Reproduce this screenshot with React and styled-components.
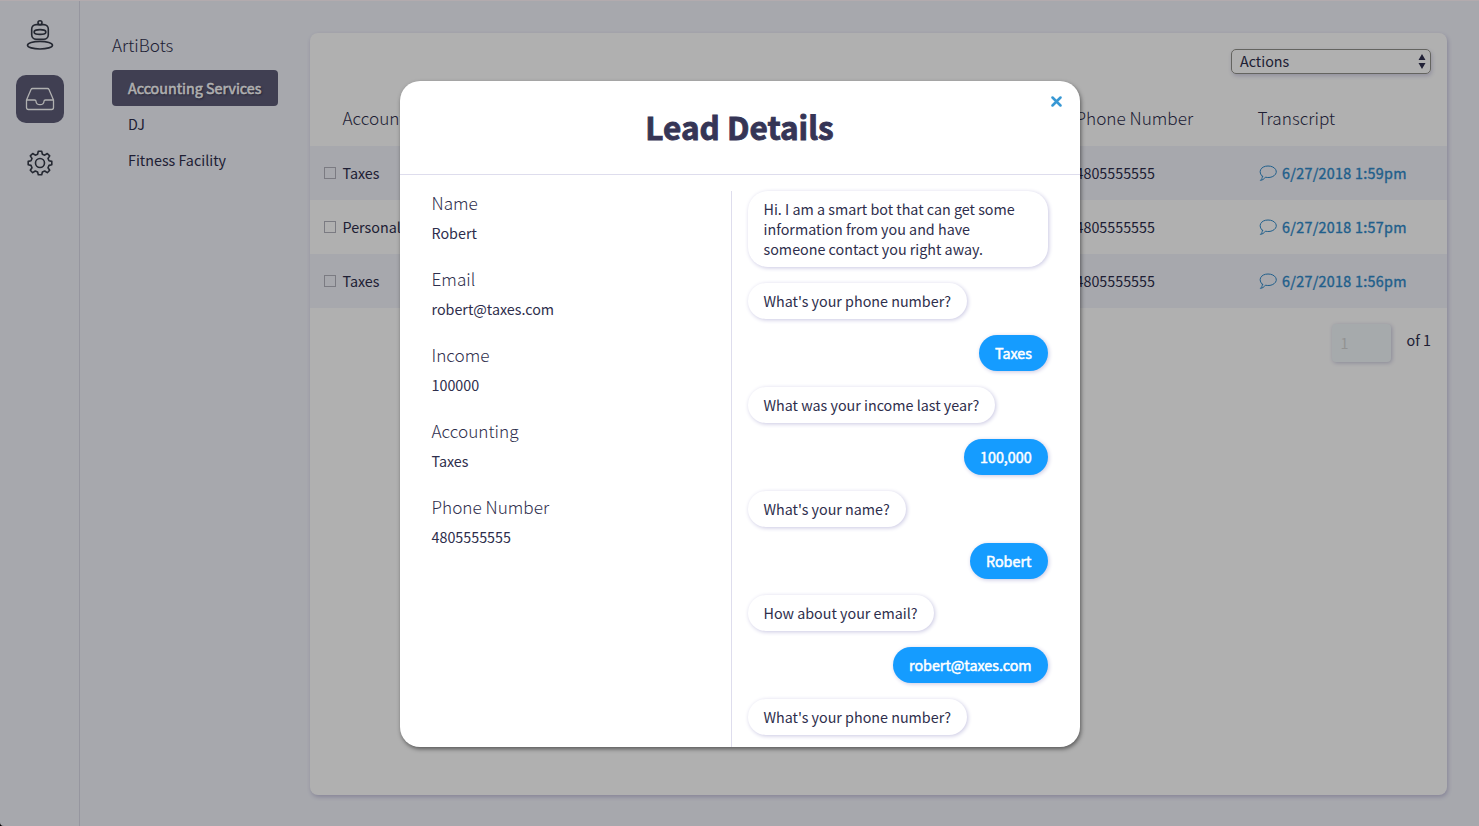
import React from "react";
import styled, { createGlobalStyle, css } from "styled-components";

const Global = createGlobalStyle`
  * { box-sizing: border-box; }
  html { background: #000; }
  body { margin: 0; overflow: hidden; color: #2e2e4c; font-family: "Noto Sans CJK SC", "Noto Sans", sans-serif; font-size: 14.32px; line-height: 20px; }
  h1, h2, h3, p, ul, dl, dt, dd { margin: 0; padding: 0; }
`;

const Page = styled.div`
  position: relative;
  display: flex;
  width: 1479px;
  height: 826px;
  overflow: hidden;
  background: #f2f3fb;
  border-top: 1px solid #b3abae;
  border-bottom-left-radius: 4px;
`;

const Rail = styled.nav`
  width: 80px;
  display: flex;
  flex-direction: column;
  align-items: center;
  gap: 16px;
  padding-top: 10px;
  border-right: 1px solid #d9dae6;
`;

const RailButton = styled.div`
  width: 48px;
  height: 48px;
  display: grid;
  place-items: center;
  border-radius: 10px;
  color: ${(p) => (p.$active ? "#ffffff" : "#353a48")};
  background: ${(p) => (p.$active ? "#5d5c78" : "transparent")};
`;

const Icon = styled.svg`
  display: block;
  fill: none;
  stroke: currentColor;
  stroke-width: ${(p) => p.$weight || 1.4};
  stroke-linejoin: round;
  stroke-linecap: round;
`;

const Sidebar = styled.aside`
  width: 230px;
  padding: 32px 32px 0;
`;

const lightLabel = css`
  font-size: 17.2px;
  font-weight: 300;
  line-height: 24px;
`;

const strong = css`
  -webkit-text-stroke: 0.5px currentColor;
`;

const SidebarTitle = styled.h2`
  ${lightLabel}
  margin-bottom: 13px;
`;

const BotItem = styled.div`
  height: 36px;
  padding: 8px 16px;
  border-radius: 4px;
  white-space: nowrap;
  ${(p) =>
    p.$active &&
    css`
      ${strong}
      background: #5d5c78;
      color: #fff;
      text-shadow: 1px 1px 2px #23233d;
    `}
`;

const Card = styled.main`
  width: 1137px;
  height: 762px;
  margin-top: 32px;
  background: #fff;
  border-radius: 8px;
  box-shadow: 1px 2px 4px #c3c1dc;
`;

const Toolbar = styled.div`
  display: flex;
  justify-content: flex-end;
  padding: 16px 16px 0;
  height: 57px;
`;

const Select = styled.div`
  width: 200px;
  height: 25px;
  display: flex;
  align-items: flex-start;
  justify-content: space-between;
  padding: 1px 4px 0 8px;
  border: 1px solid #92918c;
  border-radius: 5px;
  box-shadow: 1px 2px 4px #d3d1e5;
`;

const SelectArrows = styled.svg`
  margin-top: 3px;
  fill: #303050;
`;

const TableRow = styled.div`
  display: grid;
  grid-template-columns: 32.5px 733px 182px 1fr;
  align-items: center;
  height: ${(p) => (p.$head ? 56 : 54)}px;
  background: ${(p) => (p.$striped ? "#f2f3fb" : "transparent")};
  ${(p) => p.$head && lightLabel}
`;

const Check = styled.span`
  width: 12px;
  height: 12px;
  margin-left: 14px;
  border: 1px solid #b3b2bd;
`;

const Transcript = styled.a`
  display: flex;
  align-items: center;
  gap: 5px;
  padding-left: 1.5px;
  color: #2f8aca;
  letter-spacing: 0.3px;
  -webkit-text-stroke: 0.35px currentColor;
`;

const Pager = styled.div`
  display: flex;
  justify-content: flex-end;
  gap: 15px;
  padding: 16px 16px 0;
`;

const PageBox = styled.div`
  width: 59px;
  height: 38px;
  margin-right: 1px;
  padding: 9px 9px;
  color: #d4d4d4;
  background: #f1f6f9;
  border-radius: 4px;
  box-shadow: 1px 1px 4px #c8c7dc;
`;

const PageTotal = styled.span`
  padding-top: 6px;
`;

const Overlay = styled.div`
  position: absolute;
  inset: 0;
  top: -1px;
  background: rgba(0, 0, 0, 0.31);
  display: flex;
  justify-content: center;
  align-items: flex-start;
  padding: 81px 0 0 1px;
`;

const Modal = styled.section`
  width: 680px;
  height: 666px;
  display: flex;
  flex-direction: column;
  position: relative;
  background: #fff;
  border-radius: 20px;
  box-shadow: 1px 2px 4px rgba(0, 0, 0, 0.5);
`;

const ModalHeader = styled.header`
  height: 94px;
  flex: none;
  text-align: center;
  border-bottom: 1px solid #dedded;
`;

const ModalTitle = styled.h1`
  margin-left: -1px;
  font-size: 31.5px;
  line-height: 90px;
  font-weight: 700;
  color: #353556;
  -webkit-text-stroke: 0.9px currentColor;
`;

const Close = styled.span`
  position: absolute;
  top: 15px;
  right: 18px;
  color: #3898d4;
`;

const ModalBody = styled.div`
  flex: 1;
  display: flex;
  padding-top: 16px;
`;

const Details = styled.dl`
  width: 332px;
  padding-left: 31.5px;
  border-right: 1px solid #dedded;
`;

const Field = styled.div`
  height: 76px;
`;

const FieldLabel = styled.dt`
  ${lightLabel}
`;

const FieldValue = styled.dd`
  padding-top: 8px;
`;

const Chat = styled.div`
  flex: 1;
  display: flex;
  flex-direction: column;
  align-items: flex-start;
  gap: 16px;
  padding: 0 32px 0 16px;
`;

const Bubble = styled.div`
  width: ${(p) => p.$w}px;
  padding: 8px 0 8px 15.5px;
  border-radius: 20px;
  white-space: pre;
  background: #fff;
  box-shadow: 1px 1px 4px #c9c7e2;
  ${(p) =>
    p.$mine &&
    css`
      ${strong}
      align-self: flex-end;
      padding-left: 16px;
      background: #159cff;
      color: #fff;
    `}
`;

const bots = ["Accounting Services", "DJ", "Fitness Facility"];
const leads = [
  ["Taxes", "6/27/2018 1:59pm"],
  ["Personal", "6/27/2018 1:57pm"],
  ["Taxes", "6/27/2018 1:56pm"],
];
const fields = [
  ["Name", "Robert"],
  ["Email", "robert@taxes.com"],
  ["Income", "100000"],
  ["Accounting", "Taxes"],
  ["Phone Number", "4805555555"],
];
const messages = [
  ["Hi. I am a smart bot that can get some\ninformation from you and have\nsomeone contact you right away.", 300],
  ["What's your phone number?", 219],
  ["Taxes", 69, true],
  ["What was your income last year?", 247],
  ["100,000", 84, true],
  ["What's your name?", 158],
  ["Robert", 78, true],
  ["How about your email?", 186],
  ["robert@taxes.com", 155, true],
  ["What's your phone number?", 219],
];

const BotIcon = () => (
  <Icon $weight={1.6} width="28" height="32" viewBox="0 0 28 32">
    <circle cx="14" cy="3.7" r="2" />
    <rect x="5.7" y="5.6" width="16.6" height="14.7" rx="4.5" />
    <ellipse cx="14" cy="13" rx="5.9" ry="2.4" />
    <ellipse cx="14" cy="26.2" rx="12.5" ry="3.8" />
  </Icon>
);

const InboxIcon = () => (
  <Icon $weight={1.3} width="30" height="24" viewBox="0 0 30 24">
    <path d="M1.5 13 6 2.5Q6.5 1.5 7.5 1.5H22.5Q23.5 1.5 24 2.5L28.5 13V20.5Q28.5 22.5 26.5 22.5H3.5Q1.5 22.5 1.5 20.5ZM1.5 13H9.5Q11 13 11 14.2C11.3 18.8 18.7 18.8 19 14.2Q19 13 20.5 13H28.5" />
  </Icon>
);

const GearIcon = () => (
  <Icon $weight={1.6} width="26" height="26" viewBox="0 0 26 26">
    <circle cx="13" cy="13" r="4.5" />
    <path d="M11.3 1.2h3.4l.7 3 2.3 1 2.6-1.7 2.4 2.4L21 8.5l1 2.3 2.8.6v3.3l-2.8.7-1 2.3 1.7 2.6-2.4 2.4-2.6-1.7-2.3 1-.7 2.8h-3.4l-.7-2.8-2.3-1-2.6 1.7-2.4-2.4L5 17.7l-1-2.3-2.8-.7v-3.3l2.8-.6 1-2.3-1.7-2.6 2.4-2.4 2.6 1.7 2.3-1z" />
  </Icon>
);

const ChatIcon = () => (
  <Icon $weight={1} width="18" height="17" viewBox="0 0 18 17">
    <path d="M3.4 11.3C-1.4 7.2 1.6 1 9 1s10.8 6 6.2 9.6C12.8 12.5 9.5 12.9 6.4 12.2 5.2 14 3.3 15.2 1.4 15.4 2.7 14.3 3.4 13 3.4 11.3Z" />
  </Icon>
);

export default function App() {
  return (
    <>
      <Global />
      <Page>
        <Rail>
          <RailButton><BotIcon /></RailButton>
          <RailButton $active><InboxIcon /></RailButton>
          <RailButton><GearIcon /></RailButton>
        </Rail>
        <Sidebar>
          <SidebarTitle>ArtiBots</SidebarTitle>
          {bots.map((b, i) => <BotItem key={b} $active={i === 0}>{b}</BotItem>)}
        </Sidebar>
        <Card>
          <Toolbar>
            <Select>
              Actions
              <SelectArrows width="8" height="15" viewBox="0 0 8 15"><path d="M4 0 7.5 6H.5ZM4 15 .5 9H7.5Z" /></SelectArrows>
            </Select>
          </Toolbar>
          <TableRow $head><span /><span>Accounting</span><span>Phone Number</span><span>Transcript</span></TableRow>
          {leads.map(([type, time], i) => (
            <TableRow key={time} $striped={i % 2 === 0}>
              <Check /><span>{type}</span><span>4805555555</span>
              <Transcript><ChatIcon />{time}</Transcript>
            </TableRow>
          ))}
          <Pager><PageBox>1</PageBox><PageTotal>of 1</PageTotal></Pager>
        </Card>
        <Overlay>
          <Modal>
            <ModalHeader><ModalTitle>Lead Details</ModalTitle></ModalHeader>
            <Close><Icon $weight={2.5} width="11" height="11" viewBox="0 0 11 11"><path d="m1.5 1.5 8 8m0-8-8 8" /></Icon></Close>
            <ModalBody>
              <Details>
                {fields.map(([k, v]) => <Field key={k}><FieldLabel>{k}</FieldLabel><FieldValue>{v}</FieldValue></Field>)}
              </Details>
              <Chat>
                {messages.map(([t, w, mine], i) => <Bubble key={i} $w={w} $mine={mine}>{t}</Bubble>)}
              </Chat>
            </ModalBody>
          </Modal>
        </Overlay>
      </Page>
    </>
  );
}
